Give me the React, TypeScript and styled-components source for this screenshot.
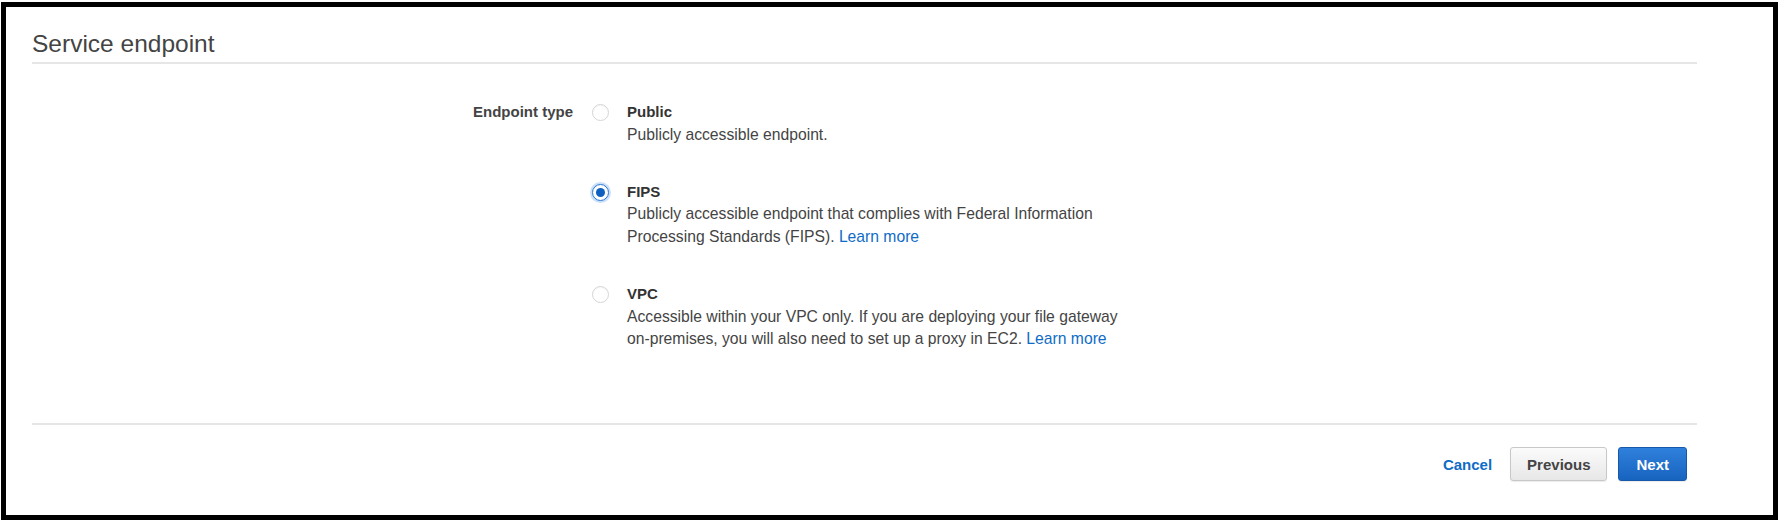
import styled, { createGlobalStyle, css } from "styled-components";

const GlobalStyle = createGlobalStyle`
  body {
    margin: 0;
    background: #fff;
    font-family: "Liberation Sans", Arial, Helvetica, sans-serif;
  }
`;

const Frame = styled.div`
  box-sizing: border-box;
  width: 1777px;
  height: 518px;
  margin: 2px 0 0 1px;
  border: 5px solid #000;
  padding: 23px 76px 0 26px;
  display: flex;
  flex-direction: column;
`;

const Header = styled.div`
  padding-bottom: 4px;
  border-bottom: 2px solid #e6e6e6;
`;

const Title = styled.h2`
  margin: 0;
  font-size: 24.5px;
  line-height: 28px;
  font-weight: 400;
  color: #444;
`;

const Form = styled.div`
  display: grid;
  grid-template-columns: 541px 1fr;
  column-gap: 19px;
  padding: 37px 0 72px;
`;

const Label = styled.div`
  text-align: right;
  font-size: 15px;
  line-height: 22.5px;
  font-weight: 700;
  color: #444;
`;

const Options = styled.div`
  display: flex;
  flex-direction: column;
  gap: 34.5px;
`;

const Option = styled.label`
  display: flex;
  align-items: flex-start;
  gap: 18px;
  cursor: pointer;
`;

const Radio = styled.span<{ checked?: boolean }>`
  box-sizing: border-box;
  flex: none;
  width: 17px;
  height: 17px;
  margin-top: 3px;
  border-radius: 50%;
  border: 1px solid #d5d5d5;
  background: #fff;
  box-shadow: inset 0 1px 1px rgba(0, 0, 0, 0.04);
  display: flex;
  align-items: center;
  justify-content: center;
  ${(p) =>
    p.checked &&
    css`
      border-color: #2a77d0;
      box-shadow: 0 0 0 2px rgba(70, 140, 230, 0.28);
      &::after {
        content: "";
        width: 9px;
        height: 9px;
        border-radius: 50%;
        background: #0f5fc0;
      }
    `}
`;

const OptionText = styled.div`
  max-width: 500px;
  font-size: 15.7px;
  line-height: 22.7px;
  color: #444;
`;

const OptionTitle = styled.div`
  font-size: 15px;
  line-height: 22.5px;
  font-weight: 700;
  color: #333;
`;

const Link = styled.a`
  color: #0f6cc6;
  text-decoration: none;
`;

const Footer = styled.div`
  border-top: 2px solid #e6e6e6;
  padding: 22px 10px 0 0;
  display: flex;
  justify-content: flex-end;
  align-items: center;
`;

const CancelLink = styled.a`
  font-size: 15px;
  font-weight: 700;
  color: #0f6cc6;
  text-decoration: none;
  margin-right: 18px;
`;

const Button = styled.button<{ primary?: boolean }>`
  box-sizing: border-box;
  height: 34px;
  padding: 0 16px;
  border-radius: 3px;
  font-family: inherit;
  font-size: 15px;
  font-weight: 700;
  cursor: pointer;
  border: 1px solid #c8c8c8;
  background: linear-gradient(#fbfbfb, #e7e7e7);
  color: #444;
  box-shadow: 0 1px 1px rgba(0, 0, 0, 0.08);
  & + & {
    margin-left: 11px;
  }
  ${(p) =>
    p.primary &&
    css`
      border-color: #1858a8;
      background: linear-gradient(#2f80dc, #1764bf);
      color: #fff;
      padding: 0 17px;
    `}
`;

const options = [
  {
    id: "public",
    title: "Public",
    text: "Publicly accessible endpoint.",
    learnMore: false,
  },
  {
    id: "fips",
    title: "FIPS",
    text: "Publicly accessible endpoint that complies with Federal Information Processing Standards (FIPS).",
    learnMore: true,
  },
  {
    id: "vpc",
    title: "VPC",
    text: "Accessible within your VPC only. If you are deploying your file gateway on-premises, you will also need to set up a proxy in EC2.",
    learnMore: true,
  },
];

function App() {
  const selected = "fips";
  return (
    <>
      <GlobalStyle />
      <Frame>
        <Header>
          <Title>Service endpoint</Title>
        </Header>
        <Form>
          <Label>Endpoint type</Label>
          <Options>
            {options.map((o) => (
              <Option key={o.id}>
                <Radio checked={o.id === selected} />
                <OptionText>
                  <OptionTitle>{o.title}</OptionTitle>
                  {o.text}
                  {o.learnMore && (
                    <>
                      {" "}
                      <Link href="#">Learn more</Link>
                    </>
                  )}
                </OptionText>
              </Option>
            ))}
          </Options>
        </Form>
        <Footer>
          <CancelLink href="#">Cancel</CancelLink>
          <Button>Previous</Button>
          <Button primary>Next</Button>
        </Footer>
      </Frame>
    </>
  );
}

export default App;
